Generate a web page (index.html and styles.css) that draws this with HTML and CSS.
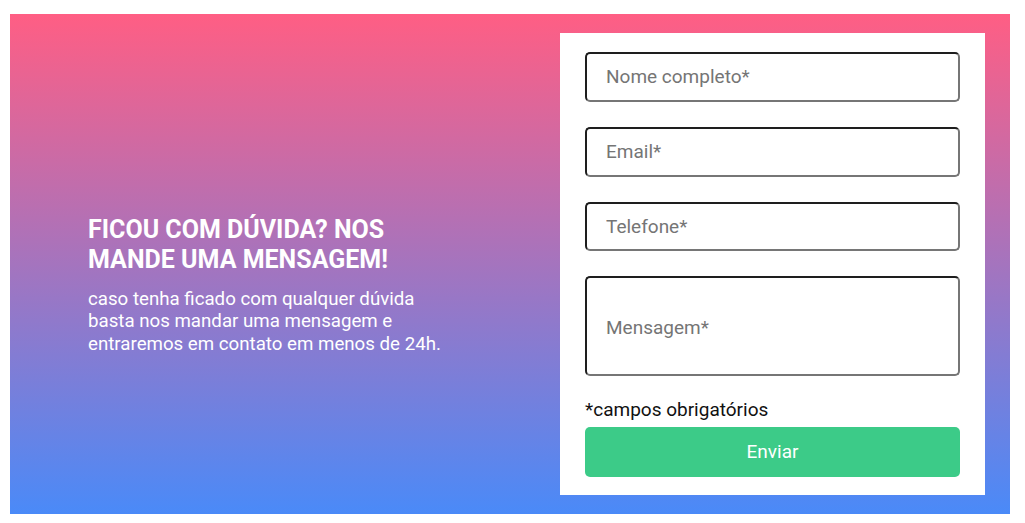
FILE: index.html
```html
<!DOCTYPE html>
<html lang="pt">
<head>
<meta charset="utf-8">
<link rel="stylesheet" href="styles.css">
</head>
<body>
<section class="contact">
  <div class="intro">
    <h2 class="intro-title">Ficou com dúvida? Nos mande uma mensagem!</h2>
    <p class="intro-text">caso tenha ficado com qualquer dúvida basta nos mandar uma mensagem e entraremos em contato em menos de 24h.</p>
  </div>
  <form class="card">
    <input class="field" type="text" placeholder="Nome completo*">
    <input class="field" type="email" placeholder="Email*">
    <input class="field" type="tel" placeholder="Telefone*">
    <div class="field area"><span class="ph">Mensagem*</span></div>
    <p class="note">*campos obrigatórios</p>
    <button class="send" type="button">Enviar</button>
  </form>
</section>
</body>
</html>
```
FILE: styles.css
```css
html, body {
  margin: 0;
  padding: 0;
  background: #fff;
  font-family: Roboto, "Liberation Sans", sans-serif;
}
.contact {
  margin: 14px 15px 0 10px;
  width: 1000px;
  height: 500px;
  box-sizing: border-box;
  background: linear-gradient(to bottom, #ff5e84 0%, #4a8af8 100%);
  display: flex;
  justify-content: space-between;
  padding: 19px 25px 19px 78px;
}
.intro {
  width: 380px;
  display: flex;
  flex-direction: column;
  justify-content: center;
  padding-top: 42px;
  color: #fff;
}
.intro-title {
  margin: 0 0 13px;
  font-size: 25px;
  line-height: 30px;
  font-weight: 700;
  text-transform: uppercase;
  width: 340px;
}
.intro-text {
  margin: 0;
  font-size: 18.7px;
  line-height: 22.5px;
  width: 372px;
}
.card {
  width: 425px;
  box-sizing: border-box;
  background: #fff;
  padding: 19px 25px 18px;
  display: flex;
  flex-direction: column;
  margin: 0;
}
.field {
  display: flex;
  align-items: center;
  height: 50px;
  box-sizing: border-box;
  margin: 0 0 25px;
  padding: 0 19px;
  border: 2px solid;
  border-color: #1e1e1e #767676 #767676 #1e1e1e;
  border-radius: 5px;
  font-family: Roboto, "Liberation Sans", sans-serif;
  font-size: 19px;
  color: #333;
  background: #fff;
  outline: none;
}
.field::placeholder {
  color: #757575;
}
.area {
  height: 100px;
  margin-bottom: 22px;
  padding-top: 2px;
}
.ph {
  color: #757575;
}
.note {
  margin: 0 0 5px;
  font-size: 19px;
  line-height: 24px;
  color: #111;
}
.send {
  height: 50px;
  border: none;
  border-radius: 5px;
  background: #3ccb88;
  color: #fff;
  font-family: Roboto, "Liberation Sans", sans-serif;
  font-size: 19px;
  padding-bottom: 2px;
  cursor: pointer;
}
```
